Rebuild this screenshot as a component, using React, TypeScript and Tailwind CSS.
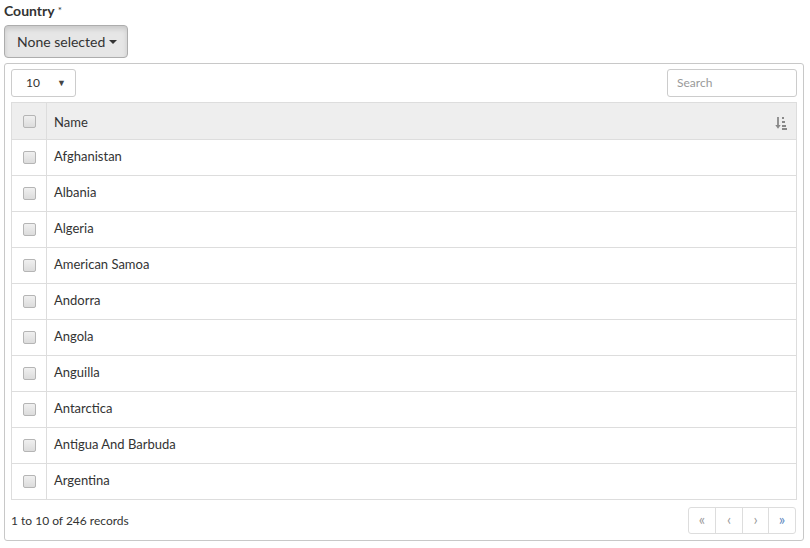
import React from 'react';

const countries = [
  'Afghanistan',
  'Albania',
  'Algeria',
  'American Samoa',
  'Andorra',
  'Angola',
  'Anguilla',
  'Antarctica',
  'Antigua And Barbuda',
  'Argentina',
];

function Box() {
  return (
    <span className="block w-[13px] h-[13px] rounded-[2px] border border-[#b5b5b5] bg-gradient-to-b from-[#f0f0f0] to-[#dcdcdc]" />
  );
}

function SortIcon() {
  return (
    <svg width="12" height="14" viewBox="0 0 12 14" className="text-[#888]">
      <path d="M3 1v10" stroke="currentColor" strokeWidth="1.8" />
      <path d="M0.3 9l2.7 3.7L5.7 9z" fill="currentColor" />
      <rect x="7" y="1" width="2" height="2" fill="currentColor" />
      <rect x="7" y="5" width="3" height="2" fill="currentColor" />
      <rect x="7" y="9" width="4" height="2" fill="currentColor" />
      <rect x="7" y="12" width="5" height="2" fill="currentColor" />
    </svg>
  );
}

export default function App() {
  return (
    <div className="w-[810px] h-[548px] bg-white text-[#333] font-['Lato','Liberation_Sans',sans-serif] px-1 pt-[2px]">
      <label className="block text-[14px] font-bold leading-[17px]">
        Country <span className="font-normal text-[10px] align-top">*</span>
      </label>
      <button className="mt-[6px] h-[33px] pl-[12px] pr-[10px] rounded-[4px] border border-[#adadad] bg-[#e6e6e6] shadow-[inset_0_3px_5px_rgba(0,0,0,0.125)] text-[14px] flex items-center gap-[4px]">
        None selected
        <span className="inline-block w-0 h-0 border-x-[4px] border-x-transparent border-t-[4px] border-t-[#333]" />
      </button>

      <div className="mt-[5px] w-[800px] h-[478px] border border-[#c8c8c8] rounded-[3px] px-[6px] pt-[5px]">
        <div className="flex justify-between items-center h-[28px]">
          <div className="w-[65px] h-[28px] border border-[#ccc] rounded-[3px] flex items-center justify-between pl-[14px] pr-[9px] text-[12px]">
            <span>10</span>
            <span className="text-[9px] text-[#444]">▼</span>
          </div>
          <div className="w-[130px] h-[28px] border border-[#ccc] rounded-[3px] flex items-center px-[9px] text-[12px] text-[#999]">
            Search
          </div>
        </div>

        <table className="mt-[5px] w-[786px] border-collapse border border-[#ddd] text-[13px]">
          <thead>
            <tr className="bg-[#eee] h-[37px]">
              <td className="w-[35px] border border-[#ddd]">
                <div className="flex justify-center"><Box /></div>
              </td>
              <td className="border border-[#ddd] pl-[7px] pr-[9px]">
                <div className="flex items-center justify-between pt-[3px]">
                  <span>Name</span>
                  <SortIcon />
                </div>
              </td>
            </tr>
          </thead>
          <tbody>
            {countries.map((c) => (
              <tr key={c} className="h-[36px]">
                <td className="border border-[#ddd]">
                  <div className="flex justify-center pb-[1px]"><Box /></div>
                </td>
                <td className="border border-[#ddd] pl-[7px] pb-[2px]">{c}</td>
              </tr>
            ))}
          </tbody>
        </table>

        <div className="flex justify-between items-center mt-[7px]">
          <span className="text-[12px]">1 to 10 of 246 records</span>
          <div className="flex h-[27px] border border-[#ddd] rounded-[3px] text-[15px] mr-[1px]">
            <span className="w-[27px] flex items-center justify-center text-[#999] border-r border-[#ddd] pb-[2px]">«</span>
            <span className="w-[27px] flex items-center justify-center text-[#999] border-r border-[#ddd] pb-[2px]">‹</span>
            <span className="w-[26px] flex items-center justify-center text-[#999] border-r border-[#ddd] pb-[2px]">›</span>
            <span className="w-[26px] flex items-center justify-center text-[#5b87bd] pb-[2px]">»</span>
          </div>
        </div>
      </div>
    </div>
  );
}
